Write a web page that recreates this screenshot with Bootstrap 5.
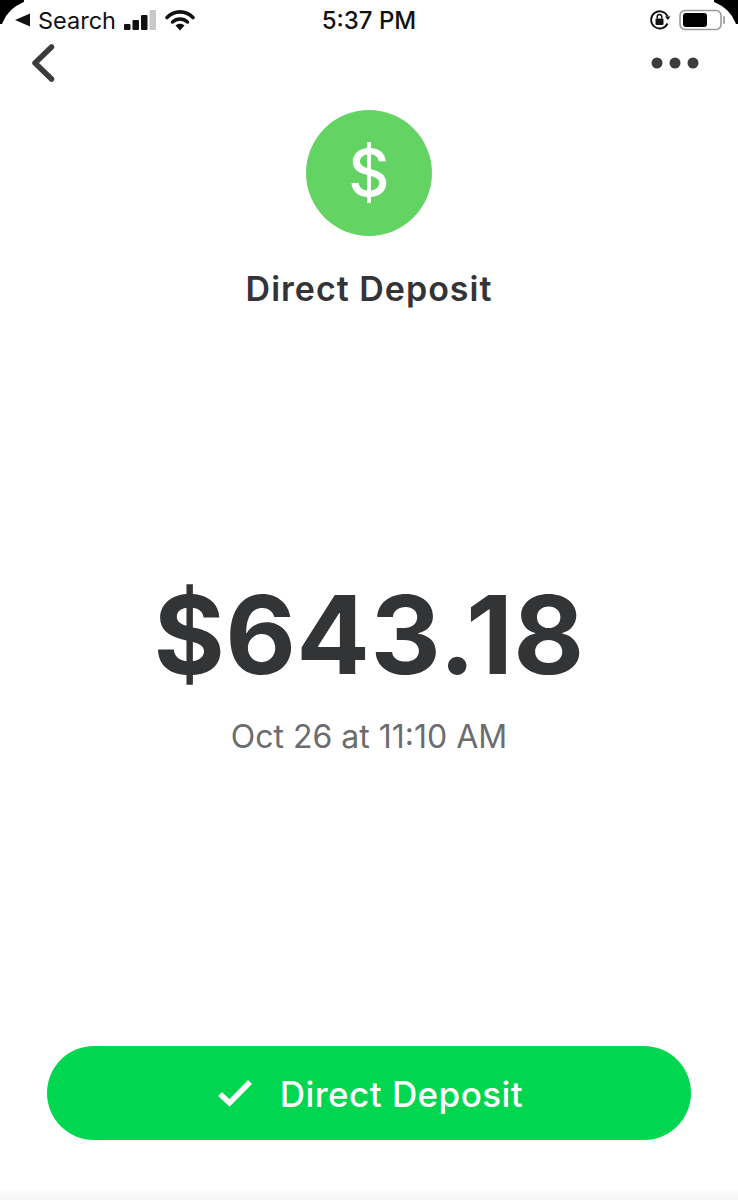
<!DOCTYPE html>
<html lang="en">
<head>
  <meta charset="UTF-8">
  <meta name="viewport" content="width=device-width, initial-scale=1">
  <title>Direct Deposit</title>
  <link href="https://cdn.jsdelivr.net/npm/bootstrap@5.3.3/dist/css/bootstrap.min.css" rel="stylesheet">
  <style>
    body { background: #fff; font-family: "Inter", "Liberation Sans", sans-serif; color: #333436; }
    .screen { height: 1200px; overflow: hidden; }
    .corner-tl, .corner-tr { position: absolute; top: 0; width: 24px; height: 24px; overflow: hidden; }
    .corner-tl { left: 0; }
    .corner-tr { right: 0; }
    .corner-tl::before, .corner-tr::before { content: ""; position: absolute; top: 0; width: 72px; height: 72px; border-radius: 50%; box-shadow: 0 0 0 30px #000; }
    .corner-tl::before { left: 0; }
    .corner-tr::before { right: 0; }
    .status-bar { height: 40px; padding: 0 11px 0 15px; color: #111; position: relative; }
    .status-side { width: 240px; }
    .status-carrier { font-size: 23.5px; line-height: 1; padding-top: 2px; }
    .status-time { font-size: 24px; font-weight: 500; margin-left: -4px; padding-top: 2px; }
    .signal-icon { margin-left: 7px; }
    .wifi-icon { margin-left: 8px; }
    .nav-row { height: 46px; padding: 0 39px 0 30px; }
    .hero-circle { width: 126px; height: 126px; background: #63d464; font-size: 64px; font-weight: 500; margin-top: 24px; }
    .hero-title { font-size: 34px; font-weight: 600; letter-spacing: 1px; margin-top: 30px; line-height: 46px; }
    .amount-block { margin-top: 262px; }
    .amount { font-size: 109px; font-weight: 650; line-height: 120px; letter-spacing: .4px; }
    .amount-date { font-size: 32px; color: #6c6c6e; line-height: 40px; margin-top: 23px; }
    .deposit-btn { width: 644px; height: 94px; background: #00d64f; border: 0; border-radius: 47px; color: #fff; font-size: 35px; font-weight: 500; letter-spacing: .45px; padding: 3px 0 0 2px; }
    .check-icon { margin-right: 27px; margin-top: -3px; }
    .bottom-strip { height: 10px; margin-top: 50px; background: linear-gradient(#fbfbfb, #f6f6f6); }
  </style>
</head>
<body>
<div class="screen d-flex flex-column position-relative">
  <div class="corner-tl"></div>
  <div class="corner-tr"></div>

  <!-- status bar -->
  <div class="status-bar d-flex align-items-center justify-content-between">
    <div class="status-side d-flex align-items-center">
      <svg width="15" height="14" viewBox="0 0 15 14"><path d="M15 0.5V13.5L0 7Z" fill="#111"/></svg>
      <span class="status-carrier ms-2">Search</span>
      <svg class="signal-icon" width="34" height="22" viewBox="0 0 34 22">
        <rect x="1" y="15" width="6.5" height="6" rx="1" fill="#111"/>
        <rect x="9.5" y="11" width="6.5" height="10" rx="1" fill="#111"/>
        <rect x="18" y="6" width="6.5" height="15" rx="1" fill="#111"/>
        <rect x="26.5" y="1" width="6.5" height="20" rx="1" fill="#c9c9c9"/>
      </svg>
      <svg class="wifi-icon" width="30" height="22" viewBox="0 0 30 22">
        <path d="M2 8.5C9.5 1 20.5 1 28 8.5" fill="none" stroke="#111" stroke-width="3.6" stroke-linecap="round"/>
        <path d="M7.5 13C12 9 18 9 22.5 13" fill="none" stroke="#111" stroke-width="3.4" stroke-linecap="round"/>
        <path d="M10.5 16.5C13 14 17 14 19.5 16.5L15 21.5Z" fill="#111"/>
      </svg>
    </div>
    <div class="status-time">5:37 PM</div>
    <div class="status-side d-flex align-items-center justify-content-end">
      <svg width="22" height="22" viewBox="0 0 22 22">
        <path d="M18.5 14.5A8.6 8.6 0 1 1 18.6 7.5" fill="none" stroke="#111" stroke-width="1.8"/>
        <path d="M16 7.5H21.5L18.8 11Z" fill="#111"/>
        <rect x="6.5" y="9.5" width="8" height="6.5" rx="1" fill="#111"/>
        <path d="M8.2 9.5V7.8A2.3 2.3 0 0 1 12.8 7.8V9.5" fill="none" stroke="#111" stroke-width="1.5"/>
      </svg>
      <svg class="ms-2" width="48" height="22" viewBox="0 0 48 22">
        <rect x="1" y="1.5" width="41" height="19" rx="5" fill="none" stroke="#9a9a9a" stroke-width="1.6"/>
        <rect x="4" y="4" width="24" height="14" rx="3" fill="#000"/>
        <path d="M45 8V14" stroke="#a8a8a8" stroke-width="2" stroke-linecap="round"/>
      </svg>
    </div>
  </div>

  <!-- back / more -->
  <div class="nav-row d-flex align-items-center justify-content-between">
    <svg width="26" height="40" viewBox="0 0 26 40"><path d="M21.5 4L5 20L21.5 36" fill="none" stroke="#3c3c3e" stroke-width="5.5" stroke-linecap="round" stroke-linejoin="round"/></svg>
    <svg width="48" height="12" viewBox="0 0 48 12" fill="#3c3c3e"><circle cx="6" cy="6" r="5.5"/><circle cx="24" cy="6" r="5.5"/><circle cx="42" cy="6" r="5.5"/></svg>
  </div>

  <div class="d-flex flex-column align-items-center">
    <div class="hero-circle rounded-circle text-white d-flex align-items-center justify-content-center">$</div>
    <div class="hero-title">Direct Deposit</div>
  </div>

  <div class="amount-block text-center">
    <div class="amount">$643.18</div>
    <div class="amount-date">Oct 26 at 11:10 AM</div>
  </div>

  <div class="mt-auto d-flex justify-content-center">
    <button type="button" class="deposit-btn btn d-flex align-items-center justify-content-center">
      <svg class="check-icon" width="36" height="28" viewBox="0 0 36 28"><path d="M3 15L12.5 24L33 3" fill="none" stroke="#fff" stroke-width="5.5"/></svg>
      <span>Direct Deposit</span>
    </button>
  </div>
  <div class="bottom-strip"></div>
</div>
<script src="https://cdn.jsdelivr.net/npm/bootstrap@5.3.3/dist/js/bootstrap.bundle.min.js"></script>
</body>
</html>
